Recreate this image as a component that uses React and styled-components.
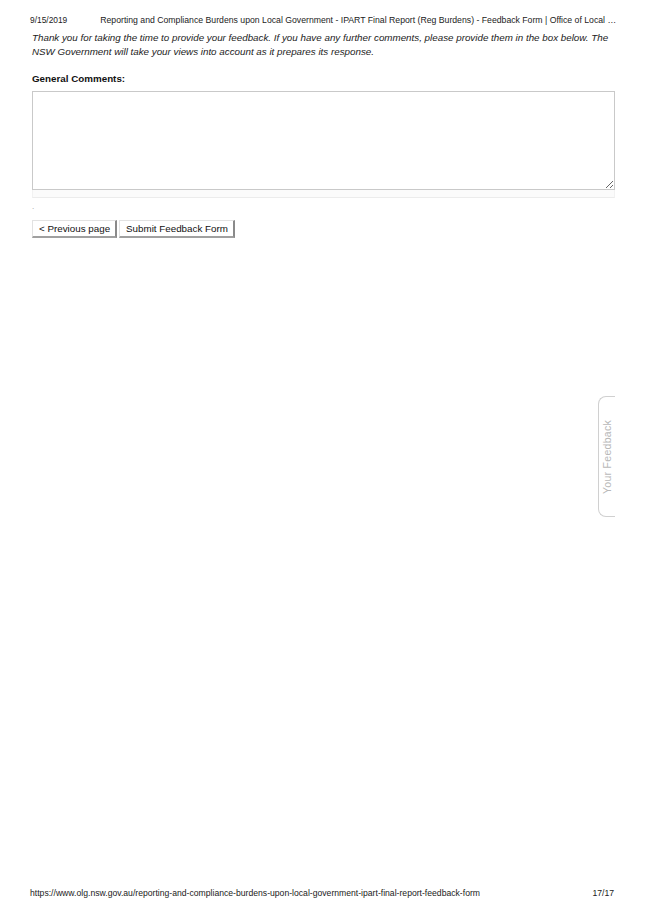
import React from "react";
import styled, { createGlobalStyle } from "styled-components";

const Global = createGlobalStyle`
  html, body {
    margin: 0;
    padding: 0;
    background: #fff;
  }
  body {
    font-family: "Liberation Sans", Arial, sans-serif;
    color: #111;
  }
`;

const Page = styled.div`
  position: relative;
  width: 645px;
  height: 913px;
  display: flex;
  flex-direction: column;
  box-sizing: border-box;
  padding: 14px 30px 14px 30px;
`;

const PrintHeader = styled.div`
  display: flex;
  align-items: baseline;
  gap: 33px;
  font-size: 8.4px;
  line-height: 12px;
  color: #222;
  white-space: nowrap;
`;

const HeaderTitle = styled.span`
  font-size: 8.7px;
`;

const Content = styled.div`
  padding-left: 2px;
  display: flex;
  flex-direction: column;
`;

const Intro = styled.p`
  margin: 5px 0 0;
  font-style: italic;
  font-size: 9.8px;
  line-height: 14px;
  color: #222;
`;

const Label = styled.label`
  margin-top: 13px;
  font-weight: bold;
  font-size: 9.8px;
  line-height: 14px;
  color: #111;
`;

const Field = styled.div`
  margin-top: 5px;
  display: flex;
  flex-direction: column;
`;

const Comments = styled.textarea`
  display: block;
  box-sizing: border-box;
  width: 583px;
  height: 99px;
  margin: 0;
  border: 1px solid #c9c9c9;
  background: #fff;
  resize: vertical;
  font-family: "Liberation Sans", Arial, sans-serif;
`;

const Strip = styled.div`
  width: 583px;
  height: 8px;
  box-sizing: border-box;
  border-bottom: 1px solid #ececec;
  border-left: 1px solid #f2f2f2;
  border-right: 1px solid #f2f2f2;
  background: #fbfbfb;
`;

const Dot = styled.div`
  margin-top: 3px;
  font-size: 8px;
  line-height: 12px;
  color: #999;
`;

const Buttons = styled.div`
  margin-top: 7px;
  display: flex;
  gap: 2px;
`;

const Btn = styled.button`
  box-sizing: border-box;
  height: 18px;
  padding: 0 5px 0 6px;
  font-family: "Liberation Sans", Arial, sans-serif;
  font-size: 9.8px;
  color: #111;
  background: #fff;
  border-top: 1px solid #e2e2e2;
  border-left: 1px solid #e2e2e2;
  border-right: 2px solid #8a8a8a;
  border-bottom: 2px solid #a0a0a0;
  cursor: pointer;
`;

const Spacer = styled.div`
  flex: 1;
`;

const Footer = styled.div`
  display: flex;
  justify-content: space-between;
  font-size: 8.65px;
  line-height: 12px;
  color: #222;
  padding-right: 1px;
`;

const FeedbackTab = styled.div`
  position: absolute;
  top: 396px;
  right: 30px;
  width: 17px;
  height: 121px;
  box-sizing: border-box;
  border: 1px solid #d0d0d0;
  border-right: none;
  border-radius: 8px 0 0 8px;
  display: flex;
  align-items: center;
  justify-content: center;
  background: #fff;
`;

const TabText = styled.span`
  transform: rotate(-90deg);
  white-space: nowrap;
  font-size: 10.5px;
  color: #b8b8b8;
  letter-spacing: 0.3px;
`;

export default function App() {
  return (
    <Page>
      <Global />
      <PrintHeader>
        <span>9/15/2019</span>
        <HeaderTitle>
          Reporting and Compliance Burdens upon Local Government - IPART Final
          Report (Reg Burdens) - Feedback Form | Office of Local …
        </HeaderTitle>
      </PrintHeader>
      <Content>
        <Intro>
          Thank you for taking the time to provide your feedback. If you have
          any further comments, please provide them in the box below. The
          <br />
          NSW Government will take your views into account as it prepares its
          response.
        </Intro>
        <Label htmlFor="comments">General Comments:</Label>
        <Field>
          <Comments id="comments" />
          <Strip />
        </Field>
        <Dot>.</Dot>
        <Buttons>
          <Btn>&lt; Previous page</Btn>
          <Btn>Submit Feedback Form</Btn>
        </Buttons>
      </Content>
      <Spacer />
      <Footer>
        <span>
          https://www.olg.nsw.gov.au/reporting-and-compliance-burdens-upon-local-government-ipart-final-report-feedback-form
        </span>
        <span>17/17</span>
      </Footer>
      <FeedbackTab>
        <TabText>Your Feedback</TabText>
      </FeedbackTab>
    </Page>
  );
}
